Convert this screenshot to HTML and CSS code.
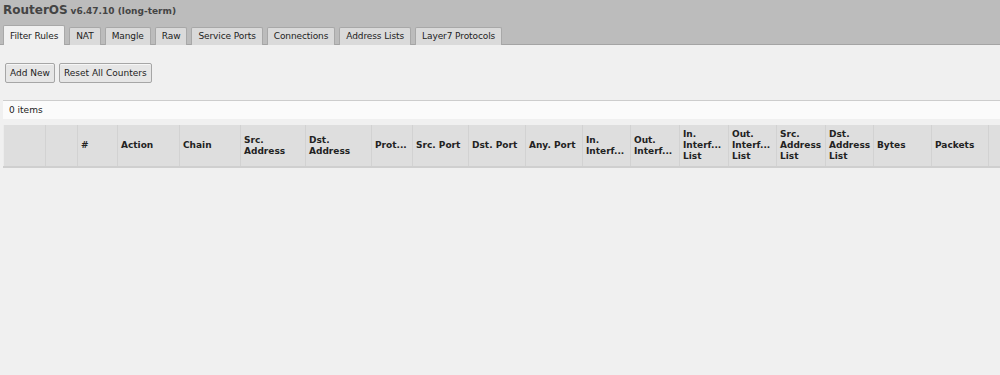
FILE: index.html
```html
<!DOCTYPE html>
<html>
<head>
<meta charset="utf-8">
<link rel="stylesheet" href="styles.css">
</head>
<body>
<div class="header">
  <div class="title"><span class="brand">RouterOS</span> <span class="ver">v6.47.10 (long-term)</span></div>
  <div class="tabs">
    <div class="tab active">Filter Rules</div>
    <div class="tab">NAT</div>
    <div class="tab">Mangle</div>
    <div class="tab">Raw</div>
    <div class="tab">Service Ports</div>
    <div class="tab">Connections</div>
    <div class="tab">Address Lists</div>
    <div class="tab">Layer7 Protocols</div>
  </div>
</div>
<div class="content">
  <div class="toolbar">
    <button class="btn">Add New</button>
    <button class="btn">Reset All Counters</button>
  </div>
  <div class="items">0 items</div>
  <div class="gridwrap">
  <table class="grid">
    <colgroup>
      <col style="width:42px"><col style="width:32px"><col style="width:40px"><col style="width:62px"><col style="width:61px"><col style="width:65px"><col style="width:66px"><col style="width:41px"><col style="width:56px"><col style="width:57px"><col style="width:57px"><col style="width:48px"><col style="width:49px"><col style="width:49px"><col style="width:48px"><col style="width:49px"><col style="width:48px"><col style="width:58px"><col style="width:57px"><col style="width:40px">
    </colgroup>
    <tr>
      <th></th><th></th><th>#</th><th>Action</th><th>Chain</th><th>Src.<br>Address</th><th>Dst.<br>Address</th><th>Prot...</th><th>Src. Port</th><th>Dst. Port</th><th>Any. Port</th><th>In.<br>Interf...</th><th>Out.<br>Interf...</th><th>In.<br>Interf...<br>List</th><th>Out.<br>Interf...<br>List</th><th>Src.<br>Address<br>List</th><th>Dst.<br>Address<br>List</th><th>Bytes</th><th>Packets</th><th></th>
    </tr>
  </table>
  </div>
</div>
</body>
</html>
```

FILE: styles.css
```css
html, body {
  margin: 0;
  padding: 0;
  background: #f0f0f0;
  font-family: "DejaVu Sans", Verdana, sans-serif;
  font-size: 9px;
  color: #222;
  overflow: hidden;
}
.header {
  background: #bcbcbc;
  border-bottom: 1px solid #a4a4a4;
  height: 45px;
  box-sizing: border-box;
  display: flex;
  flex-direction: column;
  justify-content: space-between;
}
.title {
  padding: 3px 0 0 3px;
  color: #444;
  white-space: nowrap;
}
.brand {
  font-size: 12px;
  font-weight: bold;
}
.ver {
  font-weight: bold;
  font-size: 9px;
}
.tabs {
  display: flex;
  gap: 4px;
  padding-left: 3px;
  align-items: flex-end;
  margin-bottom: -1px;
}
.tab {
  height: 17px;
  line-height: 17px;
  padding: 0 6px;
  background: #dadada;
  border: 1px solid #a8a8a8;
  border-bottom: none;
  border-radius: 2px 2px 0 0;
  color: #222;
  white-space: nowrap;
  letter-spacing: -0.1px;
}
.tab.active {
  height: 19px;
  line-height: 21px;
  background: #f0f0f0;
  border-color: #a8a8a8;
}
.content {
  padding: 0 0 0 3px;
}
.toolbar {
  display: flex;
  gap: 4px;
  padding: 18px 0 0 2px;
  height: 20px;
}
.btn {
  font-family: inherit;
  font-size: 9px;
  color: #222;
  height: 20px;
  padding: 0 4px;
  background: #e6e6e6;
  border: 1px solid #a6a6a6;
  border-radius: 2px;
  box-shadow: inset 0 1px 0 #f6f6f6;
}
.items {
  margin-top: 17px;
  height: 18px;
  line-height: 18px;
  padding-left: 6px;
  background: #fbfbfb;
  border-top: 1px solid #cdcdcd;
}
.gridwrap {
  margin-top: 6px;
  overflow: hidden;
}
.grid {
  border-collapse: collapse;
  table-layout: fixed;
  width: 1025px;
  border-bottom: 2px solid #cfcfcf;
}
.grid th {
  height: 41px;
  padding: 0 3px;
  background: #dedede;
  border-left: 1px solid #ececec;
  border-right: 1px solid #d2d2d2;
  text-align: left;
  font-size: 9px;
  font-weight: bold;
  color: #222;
  line-height: 11px;
  white-space: nowrap;
  overflow: hidden;
}
```
